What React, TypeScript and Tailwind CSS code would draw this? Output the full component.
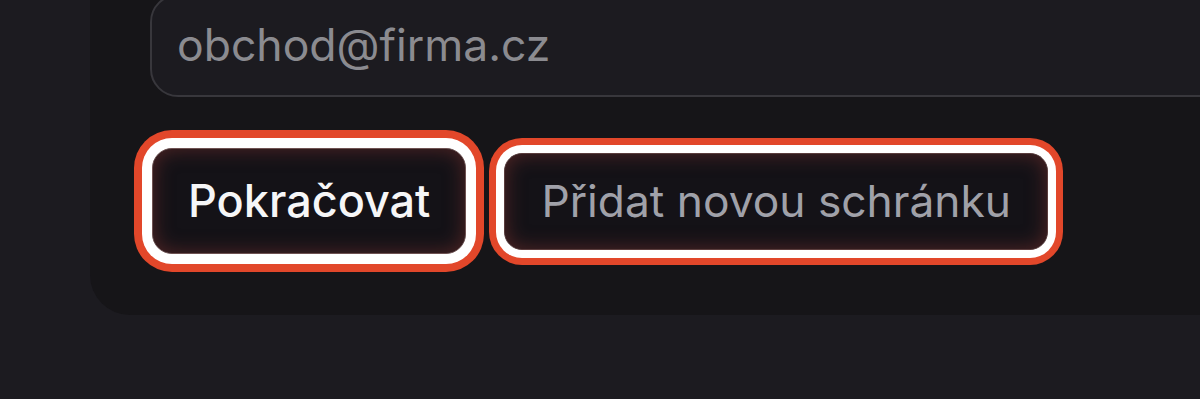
export default function App() {
    return (
        <div className="h-[399px] w-[1200px] overflow-hidden bg-[#1c1b20]" style={{ fontFamily: 'Inter, "Noto Sans", sans-serif' }}>
            {/* Card */}
            <div className="ml-[90px] w-[1200px] rounded-bl-[40px] bg-[#161518] pl-[60px] pb-[61px]">
                {/* Email input */}
                <div className="-mt-[6px] flex h-[103px] items-center rounded-[28px] border-2 border-[#38373c] bg-[#1c1b20] pl-[25px] text-[44.5px] text-[#8b8b90]">
                    obchod@firma.cz
                </div>

                {/* Actions */}
                <div className="mt-[51px] ml-[2px] flex items-center gap-[38px]">
                    <button className="flex h-[106px] items-center rounded-[20px] border border-[#6e5252] bg-[#141217] px-[35px] text-[45px] font-medium text-[#f6f6f7] shadow-[inset_0_0_20px_rgba(125,50,46,0.6),0_0_0_10px_#ffffff,0_0_0_18px_#e2472a]">
                        Pokračovat
                    </button>
                    <button className="flex h-[97px] items-center rounded-[18px] border border-[#5a3d3d] bg-[#141217] px-[36px] text-[44.3px] text-[#a0a1a9] shadow-[inset_0_0_20px_rgba(125,50,46,0.6),0_0_0_8px_#ffffff,0_0_0_15px_#e2472a]">
                        Přidat novou schránku
                    </button>
                </div>
            </div>
        </div>
    );
}
